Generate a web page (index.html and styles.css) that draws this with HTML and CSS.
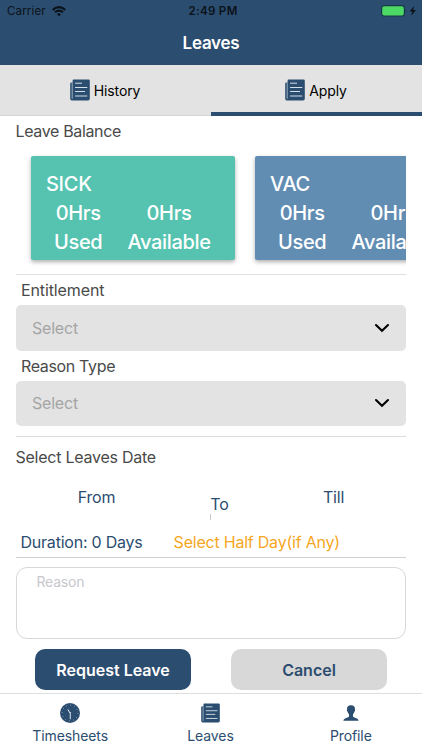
FILE: index.html
```html
<!DOCTYPE html>
<html lang="en">
<head>
<meta charset="utf-8">
<title>Leaves</title>
<link rel="stylesheet" href="styles.css">
</head>
<body>
<svg class="defs" width="0" height="0">
  <symbol id="news" viewBox="0 0 20 22">
    <path d="M1.6 3.5V20.6H3V3.5H1.4A1.3 1.3 0 0 0 .2 4.8V19.8A1.7 1.7 0 0 0 2 21.4H18.2A1.7 1.7 0 0 0 19.8 19.8V1.7A1.2 1.2 0 0 0 18.6.5H3.8A1.1 1.1 0 0 0 2.6 1.7V4" fill="#2b4d6f"/>
    <path d="M2.2 3.5V19.7" stroke="#b9c7d3" stroke-width=".8"/>
    <path d="M5.1 4.2H12M5.1 8.5H17.3M5.1 12.5H15M5.1 17H17.3" stroke="#d5dfe7" stroke-width="1" fill="none"/>
  </symbol>
</svg>
<div class="screen">
  <header class="header">
    <div class="status">
      <div class="carrier"><span>Carrier</span>
        <svg width="16" height="12" viewBox="0 0 16 12"><path d="M1.8 4.8Q8 -.6 14.2 4.8" fill="none" stroke="#0b121a" stroke-width="2.2"/><path d="M4 7.3Q8 3.9 12 7.3" fill="none" stroke="#0b121a" stroke-width="2"/><path d="M5.9 9Q8 7.3 10.1 9L8 11.2Z" fill="#0b121a"/></svg>
      </div>
      <span class="time">2:49 PM</span>
      <svg class="battery" width="36" height="12" viewBox="0 0 36 12"><rect x=".6" y=".6" width="22.8" height="10.4" rx="2.6" fill="#4cd964" stroke="#173a4b" stroke-width="1.2"/><path d="M24.7 4.1Q26.2 5.8 24.7 7.6Z" fill="#173a4b"/><path d="M33 1L28.7 6.4H31.2L30.2 10.8L35 4.9H32.2Z" fill="#0b121a"/></svg>
    </div>
    <h1>Leaves</h1>
  </header>
  <nav class="tabs">
    <div class="tab"><svg class="tab-icon"><use href="#news"/></svg><span class="history">History</span></div>
    <div class="tab active"><svg class="tab-icon"><use href="#news"/></svg><span class="apply">Apply</span></div>
  </nav>
  <main>
    <h2 class="balance">Leave Balance</h2>
    <div class="cards">
      <section class="card sick"><h3>SICK</h3><div class="numbers"><p>0Hrs<br>Used</p><p class="available">0Hrs<br><span>Available</span></p></div></section>
      <section class="card vac"><h3>VAC</h3><div class="numbers"><p>0Hrs<br>Used</p><p class="available">0Hrs<br><span>Available</span></p></div></section>
    </div>
    <div class="entitlement field"><label>Entitlement</label><div class="select"><span>Select</span><svg width="16" height="10" viewBox="0 0 16 10"><path d="M2 2L8 7.8L14 2" fill="none" stroke="#000" stroke-width="2.1" stroke-linecap="round"/></svg></div></div>
    <div class="reason-type field"><label>Reason Type</label><div class="select"><span>Select</span><svg width="16" height="10" viewBox="0 0 16 10"><path d="M2 2L8 7.8L14 2" fill="none" stroke="#000" stroke-width="2.1" stroke-linecap="round"/></svg></div></div>
    <section class="dates">
      <h2>Select Leaves Date</h2>
      <div class="range"><span class="from">From</span><div class="to"><span>To</span><i></i></div><span class="till">Till</span></div>
      <div class="duration"><span class="days">Duration: 0 Days</span><span class="half">Select Half Day(if Any)</span></div>
    </section>
    <div class="reason">Reason</div>
    <div class="actions"><button class="request">Request Leave</button><button class="cancel">Cancel</button></div>
  </main>
  <footer class="bottom">
    <div class="item"><svg width="20" height="20" viewBox="0 0 20 20"><circle cx="10" cy="10" r="10" fill="#2b4d6f"/><circle cx="10" cy="10" r="7.9" fill="none" stroke="#a9bac8" stroke-width=".9" stroke-dasharray=".8 3.336"/><path d="M8.1 6.8L9.8 9.7" stroke="#edf2f5" stroke-width="1" stroke-linecap="round"/><path d="M10.3 9V16.2" stroke="#c9d5de" stroke-width="1.1"/></svg><span class="timesheets">Timesheets</span></div>
    <div class="item"><svg width="19" height="20" viewBox="0 0 20 22" preserveAspectRatio="none"><use href="#news" width="20" height="22"/></svg><span class="leaves">Leaves</span></div>
    <div class="item"><svg width="20" height="20" viewBox="0 0 20 20"><path d="M10 2.3C7.5 2.3 5.8 3.8 6 6.4C5.7 6.7 6 8.2 6.5 8.6C6.7 9.8 7.3 10.7 8 11.3V13.5C7.3 14.8 2.8 14.9 2.4 17.7H17.6C17.2 14.9 12.7 14.8 12 13.5V11.3C12.7 10.7 13.3 9.8 13.5 8.6C14 8.2 14.3 6.7 14 6.4C14.2 3.8 12.5 2.3 10 2.3Z" fill="#2b4d6f"/></svg><span class="profile">Profile</span></div>
  </footer>
</div>
</body>
</html>
```
FILE: styles.css
```css
* { box-sizing: border-box; }
body { margin: 0; background: #fff; font-family: Inter, "Liberation Sans", sans-serif; color: #4a4a4a; font-size: 16px; }
h1, h2, h3, p { margin: 0; font-weight: 400; }
.defs { display: none; }
.screen { width: 422px; height: 750px; display: flex; flex-direction: column; overflow: hidden; white-space: nowrap; }
svg { flex: none; }

.header { height: 65px; background: #2b4d6f; }
.status { height: 22px; display: grid; grid-template-columns: 1fr auto 1fr; align-items: center; padding: 0 5px 0 7px; color: #0b121a; font-size: 11.5px; }
.carrier { display: flex; align-items: center; gap: 5px; letter-spacing: .15px; }
.time { font-weight: 600; letter-spacing: .35px; transform: translateX(1px); }
.battery { justify-self: end; }
h1 { height: 42px; line-height: 42px; color: #fff; text-align: center; font-size: 17px; font-weight: 600; letter-spacing: -.25px; }

.tabs { height: 51px; display: grid; grid-template-columns: 1fr 1fr; background: #e3e3e3; color: #000; font-size: 14px; letter-spacing: -.1px; }
.tab { display: flex; justify-content: center; align-items: center; gap: 4px; border-bottom: 1px solid #d3d6d9; padding-right: 1px; }
.tab.active { border-bottom: 4px solid #2b4d6f; padding-top: 3px; }
.tab-icon { width: 20px; height: 22px; }

main { height: 577px; padding: 0 16px 0 15.5px; }
h2 { font-size: 16px; letter-spacing: -.25px; }
.balance { height: 30px; line-height: 30px; letter-spacing: -.35px; }
.cards { height: 128px; display: flex; gap: 20px; padding: 10px 0 0 15.5px; overflow: hidden; }
.card { flex: 0 0 204px; height: 104px; border-radius: 2px; padding: 13px 15px; color: #fff; box-shadow: 0 2px 4px rgba(0,0,0,.32); font-size: 20px; line-height: 29px; }
.sick { background: #55c3b0; }
.vac { background: #628db3; }
.card h3 { font-size: 20px; font-weight: 500; letter-spacing: -.3px; line-height: 30px; }
.numbers { display: flex; gap: 25px; padding-left: 8px; }
.card p { text-align: center; font-weight: 500; letter-spacing: -.32px; }

.field label { display: block; height: 30px; line-height: 30px; padding-left: 5.5px; letter-spacing: -.12px; }
.entitlement { border-top: 1px solid #dfdfdf; height: 77px; }
.reason-type { height: 86px; border-bottom: 1px solid #dcdcdc; }
.reason-type label { letter-spacing: -.35px; }
.reason-type label { height: 29.5px; }
.select { height: 45.5px; background: #e3e3e3; border-radius: 5px; padding: 0 16px 0 16.5px; display: flex; align-items: center; justify-content: space-between; color: #a5a5a5; letter-spacing: -.2px; }

.dates { height: 121px; border-bottom: 1px solid #d0d0d0; }
.dates h2 { height: 41px; line-height: 41px; }
.range { display: grid; grid-template-columns: 162px 84px 144px; height: 49px; color: #2b4d6f; line-height: 20px; padding-top: 9px; text-align: center; letter-spacing: -.2px; }
.to { padding-top: 7px; display: flex; flex-direction: column; align-items: center; }
.to i { width: 1px; height: 6px; background: #c9c9cf; margin-right: 19px; }
.duration { display: flex; height: 30px; line-height: 30px; padding-left: 5px; color: #2b4d6f; gap: 31px; letter-spacing: -.22px; }
.half { color: #f5a623; letter-spacing: -.22px; }

.reason { height: 72px; margin-top: 9px; border: 1px solid #d8d8d8; border-radius: 11px; padding: 5px 20px; color: #c7c7cd; font-size: 14px; line-height: 18px; letter-spacing: -.2px; }
.actions { display: flex; justify-content: space-between; padding: 10px 19px 0 19.5px; }
button { width: 156px; height: 41px; border: 0; border-radius: 10px; padding: 0; font: 600 16px Inter, sans-serif; }
.request { background: #2b4d6f; color: #fff; }
.cancel { background: #d8d8d8; color: #2b4d6f; }

.bottom { height: 57px; border-top: 1px solid #dedede; display: grid; grid-template-columns: repeat(3, 1fr); padding: 9px 1px 0 0; color: #2b4d6f; font-size: 14px; letter-spacing: -.1px; }
.item { display: flex; flex-direction: column; align-items: center; line-height: 26px; }
```
